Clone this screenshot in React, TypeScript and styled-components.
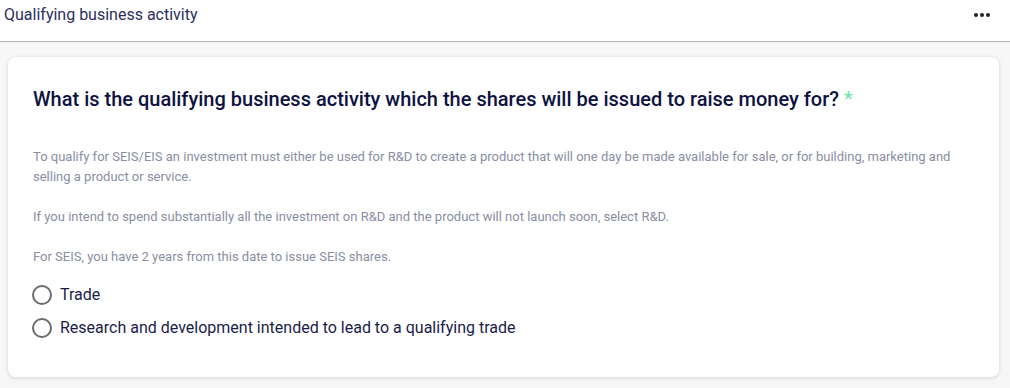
import React, { useState } from 'react';
import styled, { createGlobalStyle } from 'styled-components';

const GlobalStyle = createGlobalStyle`
  html, body {
    margin: 0;
    padding: 0;
    background: #f7f7f7;
    font-family: Roboto, "Liberation Sans", Arial, sans-serif;
  }
`;

const Page = styled.div`
  width: 1010px;
  min-height: 388px;
  background: #f7f7f7;
`;

const Header = styled.header`
  display: flex;
  align-items: center;
  justify-content: space-between;
  height: 41px;
  padding: 0 20px 0 4px;
  background: #fff;
  border-bottom: 1px solid #b3b3b3;
  box-sizing: content-box;
`;

const HeaderTitle = styled.h1`
  margin: 0 0 12px;
  font-size: 16px;
  font-weight: 400;
  color: #2c2f5e;
`;

const MoreButton = styled.button`
  display: flex;
  gap: 2px;
  padding: 0;
  margin-bottom: 12px;
  border: none;
  background: none;
  cursor: pointer;
`;

const Dot = styled.span`
  width: 4px;
  height: 4px;
  border-radius: 50%;
  background: #222;
`;

const Content = styled.main`
  padding: 15px 11px 10px 8px;
`;

const Card = styled.section`
  background: #fff;
  border-radius: 8px;
  box-shadow: 0 1px 4px rgba(0, 0, 0, 0.15);
  padding: 28px 24px 38px;
`;

const Question = styled.h2`
  margin: 0 0 34px 1px;
  font-size: 20px;
  line-height: 28px;
  font-weight: 500;
  color: #0d1242;
`;

const Required = styled.span`
  color: #6ee0b4;
  font-weight: 400;
  margin-left: 5px;
`;

const Hint = styled.p`
  margin: 0 0 20px 1px;
  font-size: 13px;
  line-height: 20px;
  color: #8a8ea3;
`;

const Options = styled.div`
  display: flex;
  flex-direction: column;
  gap: 11px;
  margin-top: -3px;
`;

const Option = styled.label`
  display: flex;
  align-items: center;
  gap: 8px;
  font-size: 16px;
  line-height: 22px;
  color: #1a1d4a;
  cursor: pointer;
`;

const Circle = styled.span<{ checked: boolean }>`
  width: 16px;
  height: 16px;
  border: 2px solid #6b6b6b;
  border-radius: 50%;
  box-sizing: content-box;
  display: flex;
  align-items: center;
  justify-content: center;
  &::after {
    content: '';
    width: 10px;
    height: 10px;
    border-radius: 50%;
    background: ${(p) => (p.checked ? '#6b6b6b' : 'transparent')};
  }
`;

const HiddenInput = styled.input`
  display: none;
`;

const options = ['Trade', 'Research and development intended to lead to a qualifying trade'];

const App = () => {
  const [value, setValue] = useState<string | null>(null);

  return (
    <Page>
      <GlobalStyle />
      <Header>
        <HeaderTitle>Qualifying business activity</HeaderTitle>
        <MoreButton aria-label="More">
          <Dot />
          <Dot />
          <Dot />
        </MoreButton>
      </Header>
      <Content>
        <Card>
          <Question>
            What is the qualifying business activity which the shares will be issued to raise money for?
            <Required>*</Required>
          </Question>
          <Hint>
            To qualify for SEIS/EIS an investment must either be used for R&amp;D to create a product that will one day be
            made available for sale, or for building, marketing and selling a product or service.
          </Hint>
          <Hint>
            If you intend to spend substantially all the investment on R&amp;D and the product will not launch soon,
            select R&amp;D.
          </Hint>
          <Hint>For SEIS, you have 2 years from this date to issue SEIS shares.</Hint>
          <Options>
            {options.map((opt) => (
              <Option key={opt}>
                <HiddenInput type="radio" name="activity" checked={value === opt} onChange={() => setValue(opt)} />
                <Circle checked={value === opt} />
                {opt}
              </Option>
            ))}
          </Options>
        </Card>
      </Content>
    </Page>
  );
};

export default App;
